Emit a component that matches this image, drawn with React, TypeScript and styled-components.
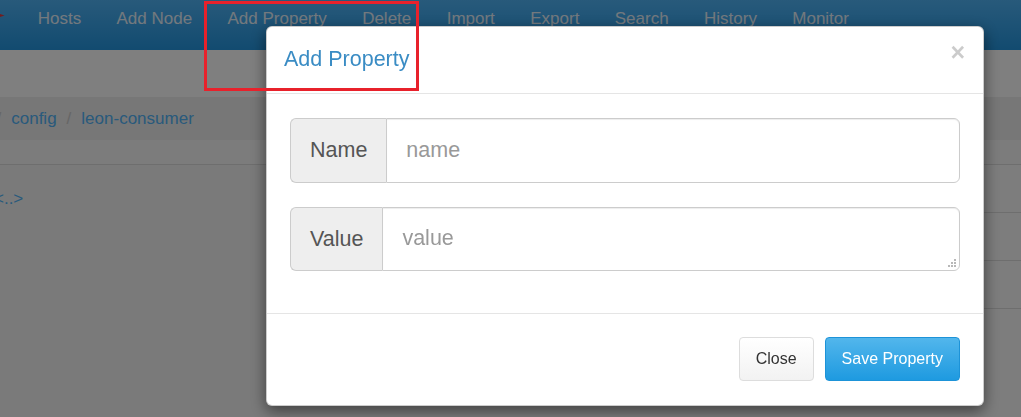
import React from "react";
import styled, { createGlobalStyle } from "styled-components";

const GlobalStyle = createGlobalStyle`
  html, body { margin: 0; padding: 0; }
  body {
    font-family: "Liberation Sans", Arial, sans-serif;
    background: #fff;
    overflow: hidden;
  }
  * { box-sizing: border-box; }
`;

const Page = styled.div`
  width: 1021px;
  height: 417px;
  overflow: hidden;
  display: flex;
  flex-direction: column;
  background: #fff;
`;

const Navbar = styled.nav`
  height: 50px;
  flex: none;
  display: flex;
  align-items: flex-start;
  background: linear-gradient(#50b4f6, #2496e0);
`;

const Brand = styled.div`
  width: 20px;
  height: 50px;
  flex: none;
`;

const NavItem = styled.a`
  padding: 9px 17.7px 0;
  font-size: 17px;
  line-height: 20px;
  color: #e6f2fc;
  text-decoration: none;
  white-space: nowrap;
`;

const TopSpacer = styled.div`
  height: 47px;
  flex: none;
  background: #fff;
`;

const BreadcrumbBar = styled.div`
  height: 43px;
  flex: none;
  display: flex;
  align-items: center;
  background: #eeeeee;
  font-size: 17px;
  overflow: hidden;
`;

const BreadcrumbRow = styled.ol`
  display: flex;
  align-items: center;
  list-style: none;
  margin: 0 0 0 -13.5px;
  padding: 0;
`;

const Crumb = styled.li`
  color: #52b4f8;
  white-space: nowrap;
`;

const Sep = styled.span`
  color: #cccccc;
  margin: 0 10px;
`;

const SubBar = styled.div`
  height: 25px;
  flex: none;
  background: #f9f9f9;
  border-bottom: 1px solid #dddddd;
`;

const Main = styled.div`
  flex: 1;
  display: flex;
`;

const LeftCol = styled.div`
  width: 290px;
  flex: none;
  background: #f4f4f4;
  padding-top: 24px;
  font-size: 17px;
  line-height: 20px;
  overflow: hidden;
`;

const TreeLink = styled.a`
  display: block;
  margin-left: -6px;
  color: #52b4f8;
  text-decoration: none;
`;

const RightCol = styled.div`
  flex: 1;
  background: #fafafa;
  display: flex;
  flex-direction: column;
`;

const TableRow = styled.div`
  height: 48px;
  border-bottom: 1px solid #dddddd;
`;

const Backdrop = styled.div`
  position: fixed;
  inset: 0;
  background: rgba(0, 0, 0, 0.5);
  display: flex;
  align-items: flex-start;
  padding: 26px 0 0 266px;
`;

const Dialog = styled.div`
  width: 718px;
  background: #fff;
  border: 1px solid rgba(0, 0, 0, 0.2);
  border-radius: 6px;
  box-shadow: 0 5px 15px rgba(0, 0, 0, 0.5);
  display: flex;
  flex-direction: column;
`;

const Header = styled.div`
  height: 67px;
  display: flex;
  justify-content: space-between;
  align-items: flex-start;
  padding: 21px 18px 0 17px;
  border-bottom: 1px solid #e5e5e5;
`;

const Title = styled.h4`
  margin: 0;
  font-size: 21.5px;
  line-height: 1.1;
  font-weight: normal;
  color: #3a8cc4;
`;

const CloseX = styled.button`
  margin-top: -8px;
  padding: 0;
  border: 0;
  background: none;
  font-family: "Liberation Sans", Arial, sans-serif;
  font-size: 25px;
  font-weight: bold;
  line-height: 1;
  color: #000;
  opacity: 0.2;
  text-shadow: 0 1px 0 #fff;
  cursor: pointer;
`;

const Body = styled.div`
  padding: 24px 23px 42px;
  display: flex;
  flex-direction: column;
  gap: 24px;
`;

const InputGroup = styled.div<{ $h: number }>`
  position: relative;
  display: flex;
  height: ${(p) => p.$h}px;
`;

const Addon = styled.span`
  display: flex;
  align-items: center;
  padding: 0 19px;
  font-size: 21.5px;
  color: #555;
  background: #eeeeee;
  border: 1px solid #cccccc;
  border-right: 0;
  border-radius: 6px 0 0 6px;
`;

const fieldStyles = `
  flex: 1;
  min-width: 0;
  border: 1px solid #cccccc;
  border-radius: 0 6px 6px 0;
  padding: 0 19px;
  font-family: "Liberation Sans", Arial, sans-serif;
  font-size: 21.5px;
  color: #555;
  background: #fff;
  outline: none;
  box-shadow: inset 0 1px 1px rgba(0, 0, 0, 0.075);
  &::placeholder { color: #999999; }
`;

const TextInput = styled.input`
  ${fieldStyles}
`;

const TextArea = styled.textarea`
  ${fieldStyles}
  padding: 15px 19px;
  line-height: 30px;
  resize: none;
  display: block;
  height: 100%;
`;

const Grip = styled.svg`
  position: absolute;
  right: 4px;
  bottom: 4px;
  width: 8px;
  height: 8px;
  pointer-events: none;
`;

const Footer = styled.div`
  border-top: 1px solid #e5e5e5;
  padding: 23px 23px 24px;
  display: flex;
  justify-content: flex-end;
  gap: 11px;
`;

const Button = styled.button<{ $primary?: boolean }>`
  height: 44px;
  padding: 0 16px;
  font-family: "Liberation Sans", Arial, sans-serif;
  font-size: 16px;
  border-radius: 4px;
  border: 1px solid ${(p) => (p.$primary ? "#1d93d8" : "#dddddd")};
  background: ${(p) =>
    p.$primary
      ? "linear-gradient(#52b6ec, #1e9ae0)"
      : "linear-gradient(#ffffff, #f2f2f2)"};
  color: ${(p) => (p.$primary ? "#fff" : "#333")};
  cursor: pointer;
`;

const Annotation = styled.div`
  position: fixed;
  left: 204px;
  top: 1px;
  width: 215px;
  height: 90px;
  border: 3px solid #e8212b;
  pointer-events: none;
  z-index: 10;
`;

const navItems = [
  "Hosts",
  "Add Node",
  "Add Property",
  "Delete",
  "Import",
  "Export",
  "Search",
  "History",
  "Monitor",
];

const gripDots: [number, number][] = [
  [6, 0],
  [3, 3],
  [6, 3],
  [0, 6],
  [3, 6],
  [6, 6],
];

export default function App() {
  return (
    <>
      <GlobalStyle />
      <Page>
        <Navbar>
          <Brand>
            <svg width="20" height="50" viewBox="0 0 20 50">
              <polygon points="-3,13 4.5,15.6 -3,17.8" fill="#e23a40" />
            </svg>
          </Brand>
          {navItems.map((n) => (
            <NavItem key={n}>{n}</NavItem>
          ))}
        </Navbar>
        <TopSpacer />
        <BreadcrumbBar>
          <BreadcrumbRow>
            <Sep>/</Sep>
            <Crumb>config</Crumb>
            <Sep>/</Sep>
            <Crumb>leon-consumer</Crumb>
          </BreadcrumbRow>
        </BreadcrumbBar>
        <SubBar />
        <Main>
          <LeftCol>
            <TreeLink>{"<..>"}</TreeLink>
          </LeftCol>
          <RightCol>
            <TableRow />
            <TableRow />
            <TableRow />
          </RightCol>
        </Main>
      </Page>
      <Backdrop>
        <Dialog>
          <Header>
            <Title>Add Property</Title>
            <CloseX aria-label="Close">×</CloseX>
          </Header>
          <Body>
            <InputGroup $h={65}>
              <Addon>Name</Addon>
              <TextInput placeholder="name" />
            </InputGroup>
            <InputGroup $h={64}>
              <Addon>Value</Addon>
              <TextArea placeholder="value" rows={1} />
              <Grip viewBox="0 0 8 8">
                {gripDots.map(([x, y]) => (
                  <rect key={`${x}-${y}`} x={x} y={y} width="2" height="2" fill="#b8b8b8" />
                ))}
              </Grip>
            </InputGroup>
          </Body>
          <Footer>
            <Button>Close</Button>
            <Button $primary>Save Property</Button>
          </Footer>
        </Dialog>
      </Backdrop>
      <Annotation />
    </>
  );
}
